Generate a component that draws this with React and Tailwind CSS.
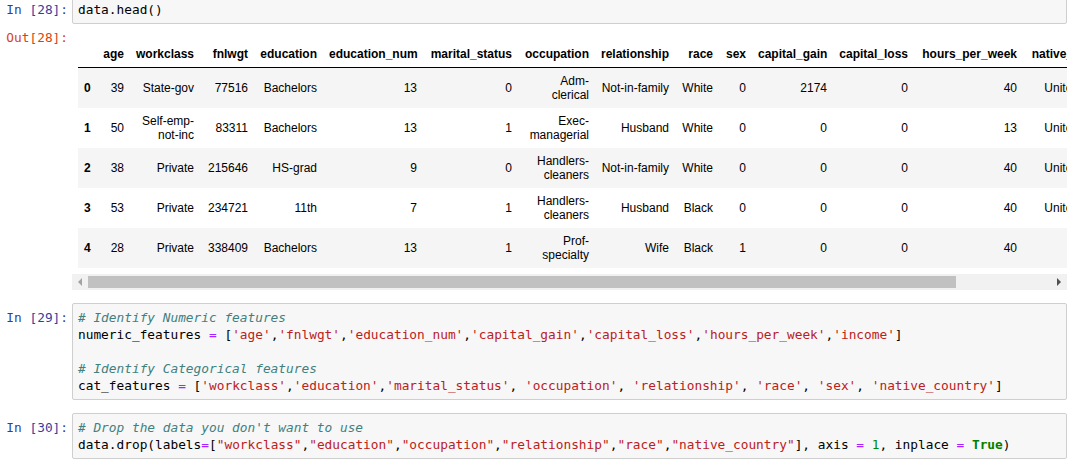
const columns = [
  { name: '', w: 'w-[18px]' },
  { name: 'age', w: 'w-[34px]' },
  { name: 'workclass', w: 'w-[70px]' },
  { name: 'fnlwgt', w: 'w-[54px]' },
  { name: 'education', w: 'w-[69px]' },
  { name: 'education_num', w: 'w-[100px]' },
  { name: 'marital_status', w: 'w-[95px]' },
  { name: 'occupation', w: 'w-[77px]' },
  { name: 'relationship', w: 'w-[80px]' },
  { name: 'race', w: 'w-[44px]' },
  { name: 'sex', w: 'w-[33px]' },
  { name: 'capital_gain', w: 'w-[81px]' },
  { name: 'capital_loss', w: 'w-[81px]' },
  { name: 'hours_per_week', w: 'w-[109px]' },
  { name: 'native_country', w: 'w-[100px]' },
];

const rows = [
  ['0', '39', 'State-gov', '77516', 'Bachelors', '13', '0', 'Adm-|clerical', 'Not-in-family', 'White', '0', '2174', '0', '40', 'United-States'],
  ['1', '50', 'Self-emp-|not-inc', '83311', 'Bachelors', '13', '1', 'Exec-|managerial', 'Husband', 'White', '0', '0', '0', '13', 'United-States'],
  ['2', '38', 'Private', '215646', 'HS-grad', '9', '0', 'Handlers-|cleaners', 'Not-in-family', 'White', '0', '0', '0', '40', 'United-States'],
  ['3', '53', 'Private', '234721', '11th', '7', '1', 'Handlers-|cleaners', 'Husband', 'Black', '0', '0', '0', '40', 'United-States'],
  ['4', '28', 'Private', '338409', 'Bachelors', '13', '1', 'Prof-|specialty', 'Wife', 'Black', '1', '0', '0', '40', 'Cuba'],
];

const mono = "font-['DejaVu_Sans_Mono','Liberation_Mono',monospace] text-[12.8px] leading-[17px]";

function C({ children }) {
  return <span className="italic text-[#408080]">{children}</span>;
}
function S({ children }) {
  return <span className="text-[#BA2121]">{children}</span>;
}
function O({ children }) {
  return <span className="text-[#AA22FF]">{children}</span>;
}
function N({ children }) {
  return <span className="text-[#008800]">{children}</span>;
}
function K({ children }) {
  return <span className="font-bold text-[#008000]">{children}</span>;
}

function Prompt({ label, out }) {
  return (
    <div className={`${mono} w-[72px] shrink-0 pr-[4px] text-right whitespace-pre ${out ? 'text-[#D84315]' : 'text-[#303F9F]'}`}>
      {label}
    </div>
  );
}

function CodeCell({ n, children, className = '' }) {
  return (
    <div className={`flex ${className}`}>
      <div className="pt-[6px]">
        <Prompt label={`In [${n}]:`} />
      </div>
      <div className="flex-1 min-w-0 rounded-[2px] border border-[#cfcfcf] bg-[#f7f7f7] px-[5px] py-[5px]">
        <pre className={`${mono} text-black m-0`}>{children}</pre>
      </div>
    </div>
  );
}

function Cell({ value }) {
  const parts = value.split('|');
  return parts.map((p, i) => (
    <span key={i}>
      {i > 0 && <br />}
      {p}
    </span>
  ));
}

function DataTable() {
  return (
    <div className="overflow-hidden pl-[6px]">
      <table className="table-fixed border-collapse w-[1045px] font-['Liberation_Sans',Arial,sans-serif] text-[12px] leading-[14px] text-black">
        <colgroup>
          {columns.map((c, i) => (
            <col key={i} className={c.w} />
          ))}
        </colgroup>
        <thead>
          <tr className="border-b border-black">
            {columns.map((c, i) => (
              <th key={i} className="px-[6px] py-[6px] text-right align-bottom font-bold whitespace-nowrap">
                {c.name}
              </th>
            ))}
          </tr>
        </thead>
        <tbody>
          {rows.map((r, ri) => (
            <tr key={ri} className={`h-[40px] ${ri % 2 === 0 ? 'bg-[#f5f5f5]' : 'bg-white'}`}>
              {r.map((v, ci) =>
                ci === 0 ? (
                  <th key={ci} className="px-[6px] text-right align-middle font-bold">{v}</th>
                ) : (
                  <td key={ci} className="px-[6px] py-[6px] text-right align-middle whitespace-nowrap">
                    <Cell value={v} />
                  </td>
                )
              )}
            </tr>
          ))}
        </tbody>
      </table>
      <div className="h-[6px]" />
    </div>
  );
}

function ScrollBar() {
  return (
    <div className="flex h-[16px] bg-[#f1f1f1]">
      <div className="w-[16px] flex items-center justify-center">
        <div className="w-0 h-0 border-y-[4px] border-y-transparent border-r-[4px] border-r-[#a3a3a3]" />
      </div>
      <div className="w-[868px] my-[2px] bg-[#c1c1c1]" />
      <div className="flex-1" />
      <div className="w-[16px] flex items-center justify-center">
        <div className="w-0 h-0 border-y-[4px] border-y-transparent border-l-[4px] border-l-[#505050]" />
      </div>
    </div>
  );
}

export default function App() {
  return (
    <div className="w-[1084px] h-[465px] overflow-hidden bg-white pr-[17px]">
      <div className="-mt-[5px] flex">
        <div className="pt-[6px]">
          <Prompt label="In [28]:" />
        </div>
        <div className="flex-1 rounded-[2px] border border-[#cfcfcf] bg-[#f7f7f7] px-[5px] py-[5px]">
          <pre className={`${mono} text-black m-0`}>data.head()</pre>
        </div>
      </div>

      <div className="flex">
        <div className="pt-[5px]">
          <Prompt label="Out[28]:" out />
        </div>
        <div className="flex-1 min-w-0 pt-[17px]">
          <DataTable />
          <ScrollBar />
        </div>
      </div>

      <CodeCell n={29} className="mt-[13px]">
        <C># Identify Numeric features</C>
        {'\n'}numeric_features <O>=</O> [<S>'age'</S>,<S>'fnlwgt'</S>,<S>'education_num'</S>,<S>'capital_gain'</S>,<S>'capital_loss'</S>,<S>'hours_per_week'</S>,<S>'income'</S>]
        {'\n\n'}
        <C># Identify Categorical features</C>
        {'\n'}cat_features <O>=</O> [<S>'workclass'</S>,<S>'education'</S>,<S>'marital_status'</S>, <S>'occupation'</S>, <S>'relationship'</S>, <S>'race'</S>, <S>'sex'</S>, <S>'native_country'</S>]
      </CodeCell>

      <CodeCell n={30} className="mt-[13px]">
        <C># Drop the data you don't want to use</C>
        {'\n'}data.drop(labels<O>=</O>[<S>"workclass"</S>,<S>"education"</S>,<S>"occupation"</S>,<S>"relationship"</S>,<S>"race"</S>,<S>"native_country"</S>], axis <O>=</O> <N>1</N>, inplace <O>=</O> <K>True</K>)
      </CodeCell>
    </div>
  );
}
